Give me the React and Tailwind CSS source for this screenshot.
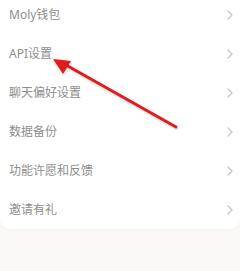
import React from 'react';

const items = ['Moly钱包', 'API设置', '聊天偏好设置', '数据备份', '功能许愿和反馈', '邀请有礼'];

const Chevron = () => (
    <svg width="6" height="10" viewBox="0 0 6 10" fill="none">
        <path d="M1 1l4 4-4 4" stroke="#c4c4c4" strokeWidth="1.2" strokeLinecap="round" strokeLinejoin="round" />
    </svg>
);

export default function App() {
    return (
        <div
            className="relative w-[240px] h-[271px] overflow-hidden bg-[#fdf8f8]"
            style={{ fontFamily: '"Noto Sans", "Noto Sans CJK SC", sans-serif' }}
        >
            {/* Settings card */}
            <div className="-mt-[5px] bg-white rounded-b-[10px] shadow-[0_1px_3px_rgba(0,0,0,0.03)]">
                {items.map((label) => (
                    <div key={label} className="h-[39px] flex items-center justify-between pl-[9px] pr-[7px]">
                        <span className="text-[12px] text-[#8e8e8e]">{label}</span>
                        <Chevron />
                    </div>
                ))}
            </div>

            {/* Annotation arrow */}
            <svg className="absolute inset-0 pointer-events-none" width="240" height="271" viewBox="0 0 240 271">
                <defs>
                    <filter id="sh" x="-10%" y="-10%" width="120%" height="120%">
                        <feDropShadow dx="0.5" dy="1" stdDeviation="0.8" floodColor="#000" floodOpacity="0.25" />
                    </filter>
                </defs>
                <g filter="url(#sh)">
                    <line x1="176" y1="127" x2="66" y2="65" stroke="#e01b1b" strokeWidth="2.8" strokeLinecap="round" />
                    <polygon points="53,59 71,61 63,74" fill="#e01b1b" />
                </g>
            </svg>
        </div>
    );
}
